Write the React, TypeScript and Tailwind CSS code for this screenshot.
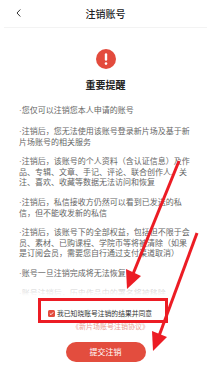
import React from "react";

const notices: string[] = [
  "您仅可以注销您本人申请的账号",
  "注销后，您无法使用该账号登录新片场及基于新片场账号的相关服务",
  "注销后，该账号的个人资料（含认证信息）及作品、专辑、文章、手记、评论、联合创作人、关注、喜欢、收藏等数据无法访问和恢复",
  "注销后，私信接收方仍然可以看到已发送的私信，但不能收发新的私信",
  "注销后，该账号下的全部权益，包括但不限于会员、素材、已购课程、学院币等将被清除（如果是订阅会员，需要您自行通过支付渠道取消）",
  "账号一旦注销完成将无法恢复",
  "账号注销后，历史作品中的署名将被移除",
];

const AlertIcon = () => (
  <svg width="20" height="20" viewBox="0 0 20 20">
    <circle cx="10" cy="10" r="10" fill="#e34b3d" />
    <rect x="8.8" y="4.2" width="2.4" height="7.6" rx="1.2" fill="#fff" />
    <circle cx="10" cy="14.6" r="1.3" fill="#fff" />
  </svg>
);

// red marks drawn over the screenshot
const Annotations = () => (
  <svg className="absolute inset-0 pointer-events-none" width="211" height="375" viewBox="0 0 211 375">
    <line x1="179" y1="161" x2="133" y2="274" stroke="#ec1c24" strokeWidth="3" />
    <polygon points="127,289 141,276 126,269" fill="#ec1c24" />
    <line x1="197" y1="233" x2="159" y2="336" stroke="#ec1c24" strokeWidth="3" />
    <polygon points="153,351 167,337 152,331" fill="#ec1c24" />
    <rect x="39.5" y="299.5" width="127" height="22" fill="none" stroke="#ec1c24" strokeWidth="3" />
  </svg>
);

export default function App() {
  return (
    <div className="relative w-[211px] h-[375px] bg-white overflow-hidden flex flex-col font-['Noto_Sans_CJK_SC',sans-serif]">
      <div className="h-[27px] shrink-0 relative flex items-center justify-center">
        <svg className="absolute left-[16px] top-[9px]" width="5" height="8" viewBox="0 0 5 8">
          <path d="M4.3 0.5 L1 4 L4.3 7.5" fill="none" stroke="#333" strokeWidth="1" />
        </svg>
        <span className="text-[10px] leading-[12px] text-[#222] font-medium">注销账号</span>
      </div>
      <div className="h-px mx-[4px] bg-[#f3f3f3] shrink-0" />

      <div className="relative flex-1 overflow-hidden">
        <div className="flex flex-col items-center pt-[21px]">
          <AlertIcon />
          <h2 className="mt-[10px] text-[10px] leading-[12px] font-bold text-[#222]">重要提醒</h2>
        </div>
        <div className="mt-[14px] pl-[19px] w-[192px] flex flex-col gap-[9.5px]">
          {notices.map((t, i) => (
            <p key={i} className="text-[8px] leading-[10px] text-[#666]">
              <span className="font-['Liberation_Sans',sans-serif]">·</span>
              {t}
            </p>
          ))}
        </div>
        <div className="absolute left-0 right-0 bottom-0 h-[18px] bg-gradient-to-b from-white/20 via-white/60 to-white" />
      </div>

      <div className="h-[79px] shrink-0 flex flex-col pt-[12px]">
        <div className="flex items-center gap-[2px] pl-[48px] h-[10px]">
          <span className="w-[7px] h-[7px] rounded-[1.5px] bg-[#e34b3d] flex items-center justify-center">
            <svg width="5" height="5" viewBox="0 0 5 5">
              <path d="M0.8 2.5 L2 3.7 L4.2 1.3" fill="none" stroke="#fff" strokeWidth="0.9" />
            </svg>
          </span>
          <span className="text-[6.8px] leading-[10px] text-[#333]">我已知晓账号注销的结果并同意</span>
        </div>
        <div className="mt-[4px] pl-[72px] text-[7px] leading-[8px] text-[#e9a096]">《新片场账号注销协议》</div>
        <div className="mt-[12px] flex justify-center">
          <button className="w-[80px] h-[20px] rounded-full bg-[#e34d3e] text-white text-[8px] leading-[20px]">提交注销</button>
        </div>
      </div>

      <Annotations />
    </div>
  );
}
